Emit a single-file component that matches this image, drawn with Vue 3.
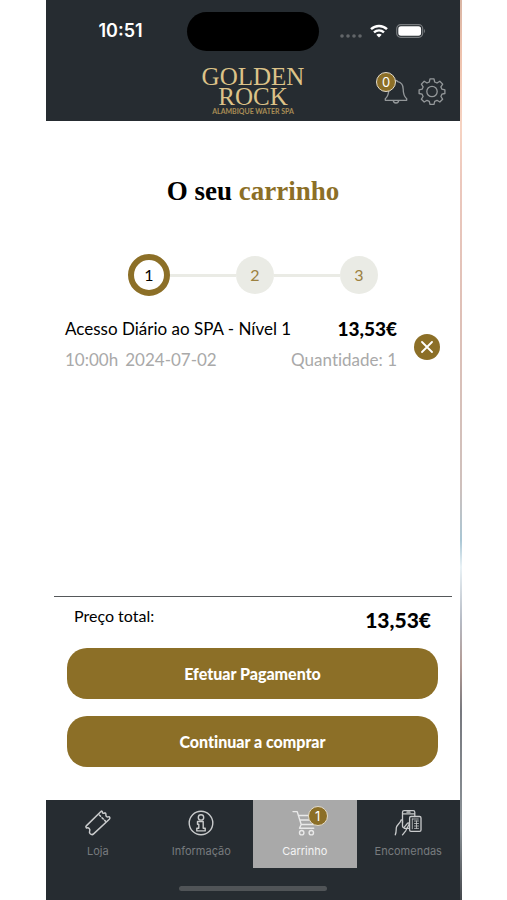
<script setup>
import { ref } from 'vue'

const steps = [1, 2, 3]
const current = ref(1)
const notifications = 0
const cartCount = 1
const tabs = [
  { id: 'loja', label: 'Loja' },
  { id: 'info', label: 'Informação' },
  { id: 'cart', label: 'Carrinho' },
  { id: 'orders', label: 'Encomendas' }
]
const active = ref('cart')
</script>

<template>
  <div class="stage">
    <div class="phone">
      <header class="top">
        <div class="status">
          <span class="clock">10:51</span>
          <span class="island"></span>
          <span class="signals">
            <svg width="22" height="6" viewBox="0 0 22 6" fill="#626669">
              <circle cx="2" cy="4" r="1.8" /><circle cx="8" cy="4" r="1.8" /><circle cx="14" cy="4" r="1.8" /><circle cx="20" cy="4" r="1.8" />
            </svg>
            <svg width="18" height="14" viewBox="0 0 18 14" fill="none" stroke="#fff" stroke-width="2.4">
              <path d="M1 5.2C5.4.9 12.600.9 17 5.200" />
              <path d="M4 8.400c2.900-2.600 7.100-2.600 10 0" />
              <path d="M9 13.500 6.300 10.800c1.500-1.400 3.900-1.400 5.400 0z" fill="#fff" stroke="none" />
            </svg>
            <svg width="30" height="14" viewBox="0 0 30 14">
              <rect x=".7" y=".7" width="26" height="12.600" rx="4" fill="none" stroke="#777b7e" stroke-width="1.200" />
              <rect x="2.300" y="2.300" width="22.800" height="9.400" rx="2.600" fill="#fff" />
              <path d="M28 5v4c1.300-.5 1.300-3.500 0-4z" fill="#777b7e" />
            </svg>
          </span>
        </div>
        <div class="brandbar">
          <div class="brand">
            <span class="brand-name">GOLDEN</span>
            <span class="brand-name second">ROCK</span>
            <span class="brand-sub">ALAMBIQUE WATER SPA</span>
          </div>
          <div class="actions">
            <button class="icon-btn bell" type="button" aria-label="Notificações">
              <svg width="24" height="26" viewBox="0 0 24 26" fill="none" stroke="#94989a" stroke-width="1.300" stroke-linejoin="round">
                <path d="M10.300 3.700a1.800 1.800 0 0 1 3.400 0c4 .8 5.500 4 5.500 7.500 0 5.500 1 7.300 3.500 9.500v1.600H1.300v-1.600c2.500-2.200 3.500-4 3.500-9.500 0-3.500 1.500-6.700 5.500-7.500z" />
                <path d="M9.300 22.300a2.700 2.700 0 0 0 5.400 0" />
              </svg>
              <span class="badge">{{ notifications }}</span>
            </button>
            <button class="icon-btn" type="button" aria-label="Definições">
              <svg width="28" height="28" viewBox="0 0 28 28" fill="none" stroke="#94989a" stroke-width="1.300" stroke-linejoin="round">
                <path d="M12 1.800h4l.7 3.200 2.300 1 2.800-1.800 2.900 2.900L22.900 9.900l1 2.300 3 .6v3.700l-3 .7-1 2.300 1.700 2.700-2.800 2.800-2.800-1.700-2.300 1-.7 3.100h-4l-.7-3.100-2.300-1-2.800 1.700-2.800-2.800 1.700-2.700-1-2.300-3-.7v-3.700l3-.6 1-2.300-1.700-2.800 2.800-2.900L9 6l2.300-1z" />
                <circle cx="14" cy="14.500" r="5.200" />
              </svg>
            </button>
          </div>
        </div>
      </header>

      <main class="content">
        <h1>O seu <span>carrinho</span></h1>
        <ol class="steps">
          <li v-for="s in steps" :key="s" :class="{ on: s === current }"><span>{{ s }}</span></li>
        </ol>
        <article class="item">
          <div class="details">
            <div class="row first">
              <h2>Acesso Diário ao SPA - Nível 1</h2>
              <strong class="price">13,53€</strong>
            </div>
            <div class="row muted">
              <span class="when"><span>10:00h</span><span>2024-07-02</span></span>
              <span>Quantidade: 1</span>
            </div>
          </div>
          <button class="remove" type="button" aria-label="Remover">
            <svg width="12" height="12" viewBox="0 0 12 12" stroke="#fff" stroke-width="1.800" stroke-linecap="round"><path d="M1 1l10 10M11 1 1 11" /></svg>
          </button>
        </article>
      </main>

      <section class="summary">
        <div class="total">
          <span>Preço total:</span>
          <strong class="price big">13,53€</strong>
        </div>
        <div class="buttons">
          <button class="primary" type="button">Efetuar Pagamento</button>
          <button class="primary" type="button">Continuar a comprar</button>
        </div>
      </section>

      <footer>
        <nav>
          <a v-for="t in tabs" :key="t.id" href="#" :class="{ active: active === t.id }" @click.prevent="active = t.id">
            <span class="tab-icon">
              <svg v-if="t.id === 'loja'" width="28" height="28" viewBox="0 0 28 28" fill="none" stroke="#c9cbcc" stroke-width="1.500" stroke-linejoin="round" stroke-linecap="round">
                <path d="M17.200 2.200 2.300 16.900c-.7.700-.6 1.400.1 2.100 2.300-.9 4.200.9 3.200 3.300-.4 1.100-.2 2 .8 2.700 1.200.9 2.300.8 3.200-.1L25.300 10.200c.9-.9.700-1.900-.3-2.500-1.800.9-3.500-.2-3.100-2.200.1-.8-.3-1.500-1-1.700-1.500 1-2.700.4-2.600-1-.2-.8-.7-1-1.100-.6z" />
                <path d="m15.300 6 1.300 1.300m1.400 1.400 1.300 1.300m1.300 1.300.8.800" />
              </svg>
              <svg v-else-if="t.id === 'info'" width="28" height="28" viewBox="0 0 28 28" fill="none" stroke="#c9cbcc" stroke-width="1.400" stroke-linejoin="round">
                <circle cx="14" cy="14" r="11.800" />
                <circle cx="14" cy="8.400" r="2.700" />
                <path d="M10.500 12.500h5.700v6.700h2v2.700h-8.400v-2.700h2v-4h-1.300z" />
              </svg>
              <svg v-else-if="t.id === 'cart'" width="28" height="28" viewBox="0 0 28 28" fill="none" stroke="#e9e9e9" stroke-width="1.400" stroke-linejoin="round" stroke-linecap="round">
                <path d="M2 2.600h4.200l4 12.900h12.500l2.600-9H7.300M8.800 11h15M10.200 15.500l-1.700 3.700h14.200" />
                <circle cx="10.700" cy="23.700" r="2.200" /><circle cx="20.300" cy="23.700" r="2.200" />
              </svg>
              <svg v-else width="28" height="28" viewBox="0 0 28 28" fill="none" stroke="#c9cbcc" stroke-width="1.300" stroke-linejoin="round" stroke-linecap="round">
                <path d="M8.500 14V3.300c0-1 .6-1.600 1.600-1.600h9.100c1 0 1.600.6 1.600 1.600v4.200M8.500 4.800h12.300M13 3.200h3M10.200 19.400h5" />
                <rect x="15.600" y="7.500" width="11.400" height="14.800" rx="1.400" />
                <path d="M18.300 10v9.800M20.500 12h4M20.500 14.500h4M20.500 17h4M18.300 10h6M20.500 19.400h4M22.500 12v7.400" stroke-width=".8" />
                <path d="M1.300 25.800c1-2.500.8-4.200 1-7 .2-2.600 3.800-4.500 4.400-7 .3-1.200 1.700-1.200 1.800.2M8.500 11.600v5.800c.2 1.400 1.500 1.400 2.200.2l2.700-3.300c1-.9 2.200 0 1.600 1.200l-3.300 6.300-3.200 4" />
              </svg>
              <span v-if="t.id === 'cart'" class="badge">{{ cartCount }}</span>
            </span>
            <span class="tab-label">{{ t.label }}</span>
          </a>
        </nav>
        <div class="home"></div>
      </footer>
    </div>
    <div class="edge"></div>
  </div>
</template>

<style>
body {
  margin: 0;
  background: #fff;
}
</style>

<style scoped>
* {
  box-sizing: border-box;
}
.stage {
  display: flex;
  min-height: 100vh;
  padding: 0 45px 0 46px;
  font-family: Lato, "Liberation Sans", sans-serif;
  font-variant-ligatures: none;
  color: #000;
}
.phone {
  flex: 1;
  min-width: 0;
  display: flex;
  flex-direction: column;
  background: #fff;
}
.edge {
  width: 2px;
  background: linear-gradient(#d9b5a4 0, #eec2ad 6%, #f6d3c2 14%, #ecc8bd 20%, #dfc0b7 35%, #cfc0bc 54%, #a9c6d4 60%, #e9f2f6 63%, #b5bac4 69%, #b39a93 74%, #77797f 79%, #8b9297 92%, #44474c 100%);
}
button {
  border: 0;
  padding: 0;
  font: inherit;
  font-variant-ligatures: none;
  cursor: pointer;
}
h1,
h2,
ol {
  margin: 0;
  padding: 0;
}
.top,
footer {
  background: #262c31;
}
.status {
  display: grid;
  grid-template-columns: 1fr 132px 1fr;
  align-items: center;
  height: 62px;
}
.clock {
  justify-self: center;
  padding-left: 8px;
  font: 600 18px/22px Inter, sans-serif;
  color: #fff;
}
.island {
  height: 39px;
  border-radius: 20px;
  background: #000;
}
.signals {
  display: flex;
  align-items: center;
  justify-content: flex-end;
  gap: 8px;
  padding-right: 34px;
}
.signals svg:first-child {
  margin-top: 8px;
}
.brandbar {
  display: grid;
  grid-template-columns: 1fr auto 1fr;
  height: 59px;
}
.brand {
  grid-column: 2;
  display: flex;
  flex-direction: column;
  align-items: center;
  padding-top: 4px;
  color: #dcc288;
}
.brand-name {
  font: 25px/21px "Liberation Serif", serif;
}
.brand-name.second {
  line-height: 20px;
}
.brand-sub {
  font: bold 7px/9px Lato, sans-serif;
  color: #a98d55;
}
.actions {
  display: flex;
  justify-content: flex-end;
  align-items: center;
  gap: 10px;
  padding: 0 14px 2px 0;
}
.icon-btn {
  position: relative;
  display: flex;
  background: none;
}
.badge {
  position: absolute;
  width: 20px;
  height: 20px;
  border: 1px solid #e4dccb;
  border-radius: 50%;
  background: #8c6f27;
  color: #fff;
  font: 13px/18px Inter, sans-serif;
  text-align: center;
}
.bell .badge {
  left: -8px;
  top: -6px;
}
.content {
  flex: 1;
  padding-top: 51px;
}
h1 {
  font: bold 27px/38px "Liberation Serif", serif;
  text-align: center;
}
h1 span {
  color: #8c6f27;
}
.steps {
  display: flex;
  justify-content: center;
  align-items: center;
  height: 42px;
  margin-top: 44px;
  list-style: none;
}
.steps li {
  display: flex;
  align-items: center;
}
.steps li + li::before {
  content: "";
  width: 66px;
  height: 3px;
  background: #eaebe5;
}
.steps span {
  width: 38px;
  height: 38px;
  border-radius: 50%;
  background: #eaebe5;
  color: #9c8140;
  font-size: 16px;
  line-height: 38px;
  text-align: center;
}
.steps .on span {
  width: 42px;
  height: 42px;
  border: 6px solid #8c6f27;
  background: #fff;
  color: #000;
  line-height: 30px;
}
.item {
  display: flex;
  align-items: center;
  gap: 17px;
  padding: 21px 20px 0 19px;
}
.details {
  flex: 1;
}
.row {
  display: flex;
  justify-content: space-between;
  align-items: center;
  line-height: 24px;
}
.row.muted {
  margin-top: 7px;
  font-size: 17px;
  color: #a9a9a9;
}
.when {
  display: flex;
  gap: 7px;
}
h2 {
  font-size: 17px;
  font-weight: 400;
}
.price {
  font-size: 19px;
  font-weight: 900;
}
.price.big {
  font-size: 21px;
}
.remove {
  display: flex;
  align-items: center;
  justify-content: center;
  width: 26px;
  height: 26px;
  margin-top: 5px;
  border-radius: 50%;
  background: #8c6f27;
}
.summary {
  margin: 0 8px;
  border-top: 1px solid #55585a;
  padding-bottom: 33px;
}
.total {
  display: flex;
  justify-content: space-between;
  padding: 7px 21px 0 20px;
  font-size: 16px;
  line-height: 24px;
}
.total .price {
  padding-top: 4px;
}
.buttons {
  display: grid;
  gap: 17px;
  padding: 16px 14px 0 13px;
}
.primary {
  height: 51px;
  border-radius: 20px;
  background: #8c6f27;
  color: #fff;
  font-size: 16px;
  font-weight: 900;
}
nav {
  display: grid;
  grid-template-columns: repeat(4, 1fr);
}
nav a {
  display: flex;
  flex-direction: column;
  align-items: center;
  height: 68px;
  padding-top: 9px;
  color: #777b7e;
  text-decoration: none;
}
nav a.active {
  background: #a9a9a9;
  color: #f4f4f4;
}
.tab-icon {
  position: relative;
  height: 28px;
}
.tab-icon .badge {
  left: 17px;
  top: -3px;
}
.tab-label {
  margin-top: 7px;
  font: 11px/14px Inter, sans-serif;
}
.home {
  width: 148px;
  height: 5px;
  margin: 18px auto 9px;
  border-radius: 3px;
  background: #505457;
}
</style>
